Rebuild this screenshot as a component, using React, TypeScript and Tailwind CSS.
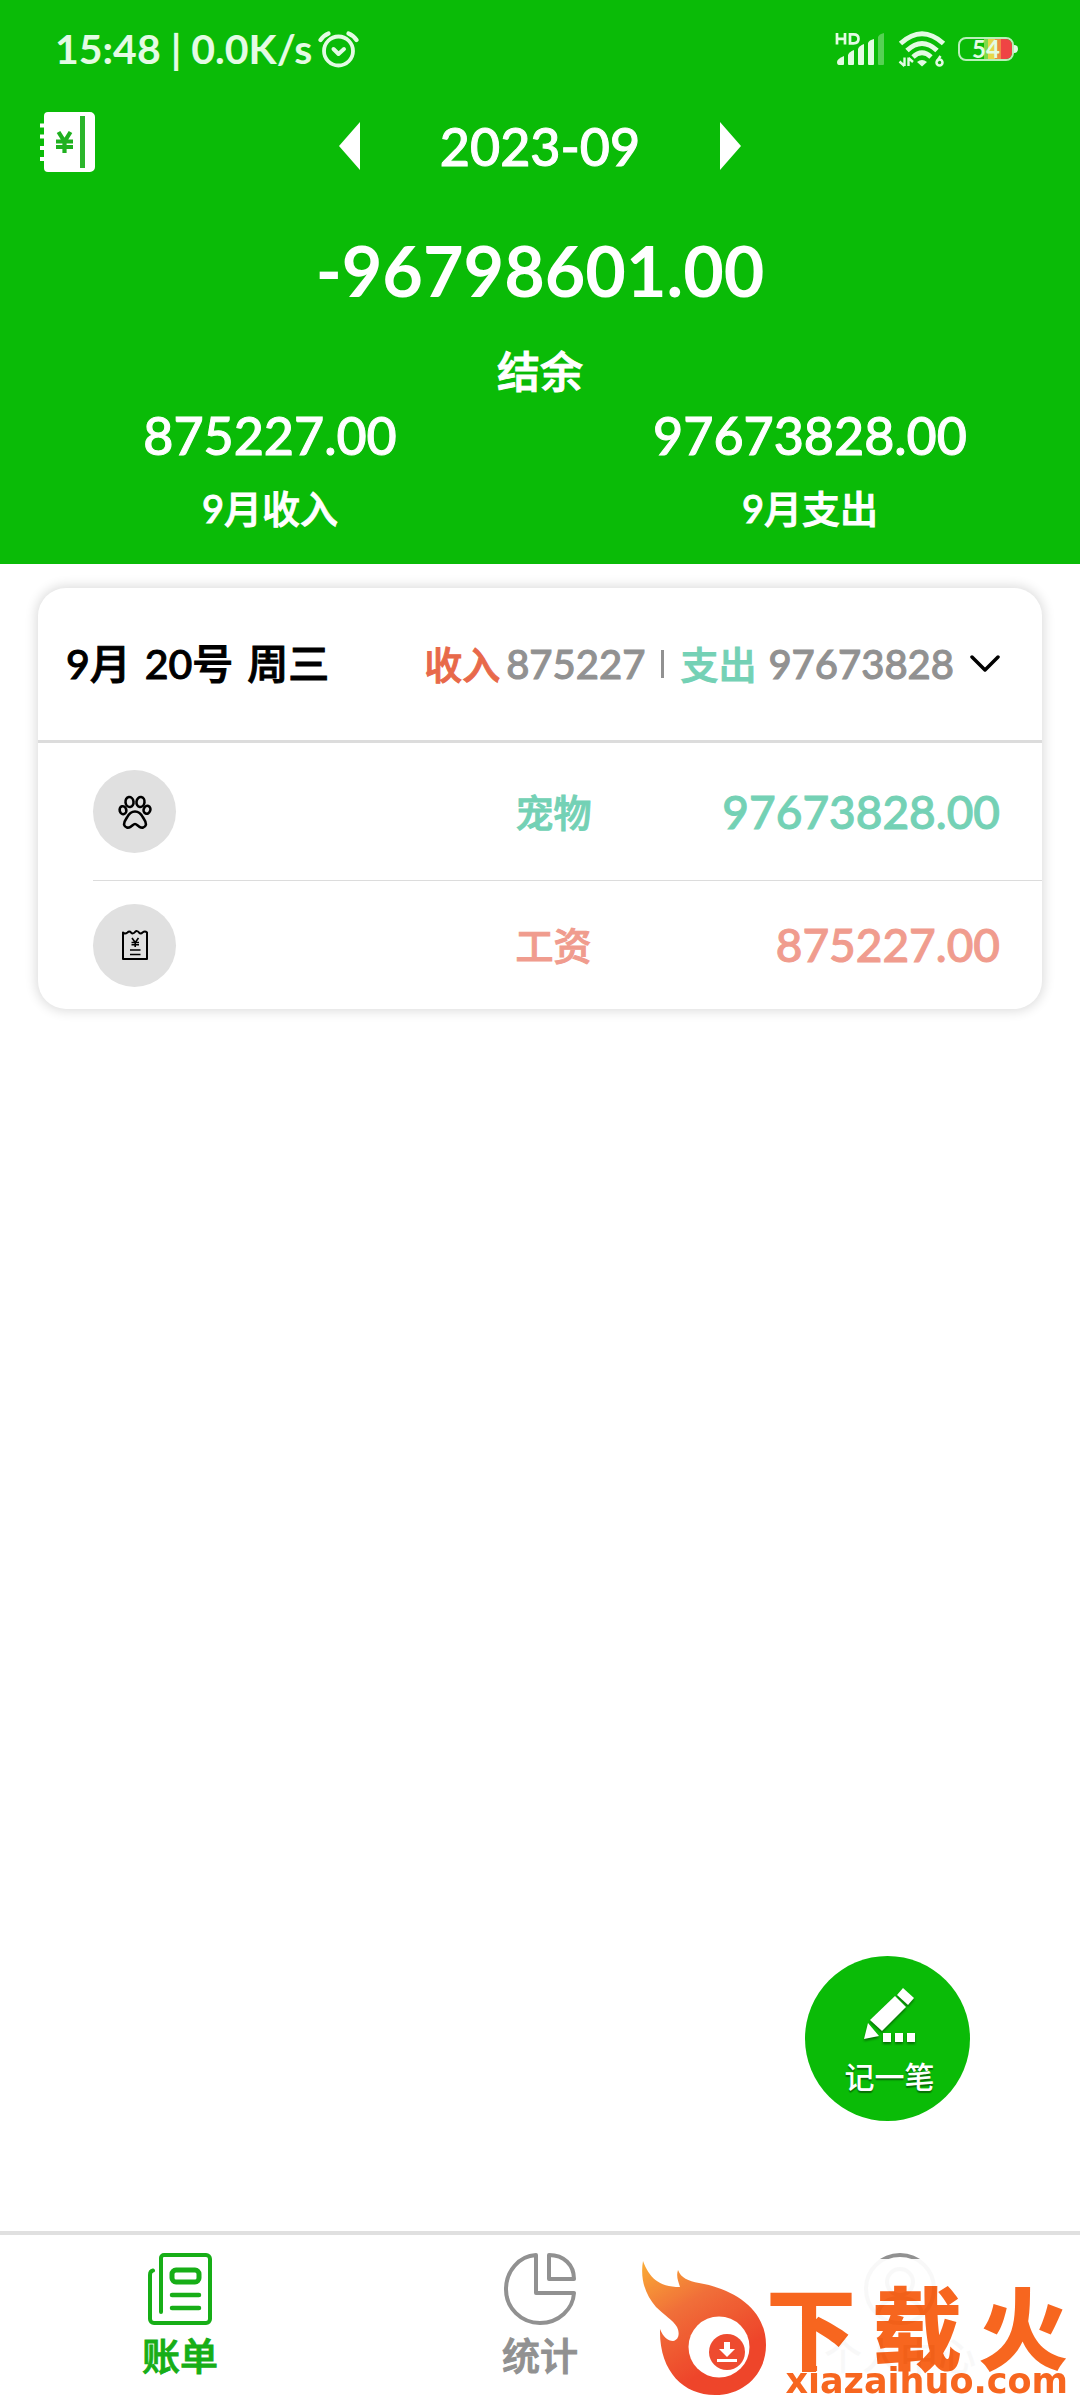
import React from "react";

type Entry = { id: string; label: string; amount: string; tone: string; icon: React.ReactNode };

function AlarmIcon() {
  return (
    <svg viewBox="0 0 41 37" className="h-[37px] w-[41px]" fill="none" stroke="currentColor" strokeLinecap="round" aria-hidden="true">
      <circle cx="20.500" cy="20" r="14.500" strokeWidth="3.800" />
      <path d="M2.500 9 Q5.500 4.500 10.500 2.500 M38.500 9 Q35.500 4.500 30.500 2.500" strokeWidth="4.200" />
      <path d="M15.500 18 L20.500 23 L26 18" strokeWidth="4" strokeLinejoin="round" />
    </svg>
  );
}

function SignalIcon() {
  return (
    <svg viewBox="0 0 52 34" className="h-[34px] w-[52px]" fill="currentColor" aria-hidden="true">
      <path d="M3 1v11.500M11 1v11.500M3 6.800h8" stroke="currentColor" strokeWidth="2.700" fill="none" />
      <path d="M16 2.300h3.500q5 0 5 4.500t-5 4.500H16z" stroke="currentColor" strokeWidth="2.700" fill="none" />
      <path d="M3 30q0-3 7-6v8a1 1 0 0 1-1 1H5q-2 0-2-3z" />
      <path d="M14 23q1-3 6-5v14a1 1 0 0 1-1 1h-4a1 1 0 0 1-1-1z" />
      <path d="M24 17q1-3 6-5v20a1 1 0 0 1-1 1h-4a1 1 0 0 1-1-1z" />
      <path d="M34 11q1-3 6-4v25a1 1 0 0 1-1 1h-4a1 1 0 0 1-1-1z" />
      <path d="M44 5q1-3 6-4v31a1 1 0 0 1-1 1h-4a1 1 0 0 1-1-1z" opacity="0.350" />
    </svg>
  );
}

function WifiIcon() {
  return (
    <svg viewBox="0 0 48 36" className="h-[36px] w-[48px]" fill="none" stroke="currentColor" aria-hidden="true">
      <path d="M2.500 12.500Q24-7 45.500 12.500" strokeWidth="5" />
      <path d="M9 19.500Q24 5.500 39 19.500" strokeWidth="5" />
      <path d="M15 26Q24 17.500 33 26" strokeWidth="4.800" />
      <path d="M19 31Q24 27 29 31L24 35.500z" fill="currentColor" stroke="none" />
      <path d="M6.500 26.500v8.500M6.500 35L1.500 30.500M10.500 35v-8.500M10.500 27L15 31" strokeWidth="2.400" />
      <path d="M42.500 25L38.800 30.500" strokeWidth="2.500" />
      <circle cx="41.500" cy="31.500" r="3" strokeWidth="2.500" />
    </svg>
  );
}

function Battery() {
  return (
    <div className="flex items-center" role="img" aria-label="54%">
      <div className="relative flex h-6 w-14 items-center justify-center rounded-lg border-2 border-[#b9f0b9]">
        <div className="absolute inset-y-0 right-0 flex overflow-hidden rounded-r-md">
          <span className="h-full w-1 bg-[#7fd94a]" />
          <span className="h-full w-[7px] bg-[#e6d84a]" />
          <span className="h-full w-1.5 bg-[#f08a45]" />
          <span className="h-full w-[11px] bg-[#ef4444]" />
        </div>
        <span className="relative text-2xl leading-7 font-bold">54</span>
      </div>
      <span className="h-2 w-1 rounded-r-full bg-[#e4fbe4]" />
    </div>
  );
}

function LedgerIcon() {
  return (
    <svg viewBox="0 0 55 60" className="h-[60px] w-[55px]" aria-hidden="true">
      <path d="M8 0h42a5 5 0 0 1 5 5v50a5 5 0 0 1-5 5H8a4 4 0 0 1-4-4V4a4 4 0 0 1 4-4z" fill="#fff" />
      <path d="M0 13.500h6M0 24.500h6M0 36h6M0 47h6" stroke="#fff" strokeWidth="4" />
      <path d="M42.500 4v52" stroke="#2bb52b" strokeWidth="5" />
      <path d="M18.500 20l6 9.500 6-9.500M24.500 28v13M16 29.500h17M16 35h17" stroke="#1fb01f" strokeWidth="4.200" fill="none" />
    </svg>
  );
}

function PawIcon() {
  return (
    <svg viewBox="0 0 34 34" className="h-[34px] w-[34px]" fill="none" stroke="#000" strokeWidth="2.600" aria-hidden="true">
      <ellipse cx="11.500" cy="7" rx="4" ry="5" transform="rotate(-8 11.500 7)" />
      <ellipse cx="22.500" cy="7" rx="4" ry="5" transform="rotate(8 22.500 7)" />
      <ellipse cx="5" cy="15.200" rx="3.300" ry="4" transform="rotate(-15 5 15.200)" />
      <ellipse cx="29" cy="14.800" rx="3.300" ry="4" transform="rotate(20 29 14.800)" />
      <path d="M17 16.500c4.500 0 6.500 3 8 6 2 3 3.500 5 2.800 7.500-.8 2.800-4 3.300-6.300 1.800-2-1.300-3-2.800-4.500-2.800s-2.500 1.500-4.500 2.800c-2.300 1.500-5.500 1-6.300-1.800-.7-2.500.8-4.500 2.800-7.500 1.500-3 3.500-6 8-6z" />
    </svg>
  );
}

function PayslipIcon() {
  return (
    <svg viewBox="0 0 26 30" className="h-[30px] w-[26px]" fill="none" stroke="#000" aria-hidden="true">
      <path d="M1 2.500v26.500h24V2.500Q23 .5 20.500 2.500 18.700 4.500 17 2.500 15 0 13 2 11 4.500 9 2.500 7.300.5 5.500 2.500 3 4.500 1 2.500z" strokeWidth="2" strokeLinejoin="round" />
      <path d="M10 8l3.200 4.500L16.500 8M13.200 12v5M9.500 12.500h7.500M9.500 14.800h7.500" strokeWidth="1.600" />
      <path d="M8 20h10.500M8 24.500h10.500" strokeWidth="1.400" />
    </svg>
  );
}

function PencilIcon() {
  return (
    <svg viewBox="0 0 52 58" className="h-[58px] w-[52px] drop-shadow-[0_2px_1px_rgba(0,0,0,0.4)]" fill="#fff" aria-hidden="true">
      <path d="M39 1l11 10-6 7-11-10z" />
      <path d="M31 9l11 11-24 24L6 33z" />
      <path d="M4 36l11 13L0 52z" />
      <path d="M19 46h8v9h-8zM31 46h8v9h-8zM43 46h8v9h-8z" />
    </svg>
  );
}

function BillIcon() {
  return (
    <svg viewBox="0 0 64 72" className="h-[72px] w-[64px]" fill="none" stroke="currentColor" strokeWidth="4" strokeLinecap="round" strokeLinejoin="round" aria-hidden="true">
      <path d="M13 59V5a3 3 0 0 1 3-3h42a4 4 0 0 1 4 4v60a4 4 0 0 1-4 4H6a4 4 0 0 1-4-4V22q0-4 3-4.500" />
      <rect x="24" y="17" width="27" height="12" rx="4" strokeWidth="5" />
      <path d="M24 42h27M24 55h27" strokeWidth="4.500" />
    </svg>
  );
}

function PieIcon() {
  return (
    <svg viewBox="0 0 72 72" className="h-[72px] w-[72px]" fill="none" stroke="currentColor" strokeWidth="4" strokeLinejoin="round" aria-hidden="true">
      <path d="M32 2C15 3 2 18 2 36.500 2 55 17 70 36 70s33-14 34-30H32z" />
      <path d="M45 2v24h25C70 12 60 2 45 2z" />
    </svg>
  );
}

function PersonIcon() {
  return (
    <svg viewBox="0 0 72 72" className="h-[72px] w-[72px]" fill="none" stroke="currentColor" strokeWidth="4" aria-hidden="true">
      <circle cx="36" cy="36" r="34" />
      <circle cx="36" cy="29" r="13" />
      <path d="M14 60q4-15 22-15t22 15" />
    </svg>
  );
}

function FlameLogo() {
  return (
    <svg viewBox="0 0 124 134" className="h-[134px] w-[124px] shrink-0" aria-hidden="true">
      <defs>
        <linearGradient id="flame" x1="0.100" y1="0" x2="0.550" y2="0.800">
          <stop offset="0" stopColor="#f9a12a" />
          <stop offset="0.450" stopColor="#f0652d" />
          <stop offset="1" stopColor="#ee3a1d" />
        </linearGradient>
      </defs>
      <path fill="url(#flame)" d="M1 0C7 16 16 26 38 26 36 20 34 15 36 9 39 17 46 20 57 22 92 28 124 48 124 84 124 113 102 134 73 134 41 134 17 110 18 68 21 76 26 80 31 80 37 79 38 72 35 66 31 59 22 54 14 46 3 33-2 18 1 0z" />
      <circle cx="77" cy="86" r="30.500" fill="#fff" />
      <circle cx="85" cy="91" r="18" fill="#ee4023" />
      <path d="M82 81h6v7h5l-8 8-8-8h5zM75 98h20v3H75z" fill="#fff" />
    </svg>
  );
}

const entries: Entry[] = [
  { id: "pet", label: "宠物", amount: "97673828.00", tone: "text-[#74d1b5]", icon: <PawIcon /> },
  { id: "pay", label: "工资", amount: "875227.00", tone: "text-[#f09c8e]", icon: <PayslipIcon /> },
];

const totals = [
  { label: "9月收入", amount: "875227.00" },
  { label: "9月支出", amount: "97673828.00" },
];

export default function App() {
  return (
    <div className="flex min-h-screen flex-col bg-white font-['Lato','Noto_Sans_CJK_SC',sans-serif] font-medium">
      <header className="bg-[#0abb07] pb-[26px] text-white">
        <div className="flex h-[98px] items-center justify-between pr-[62px] pl-[55px] text-[#e4fbe4]">
          <div className="flex items-center gap-1.5">
            <span className="text-[41px] leading-[48px] font-bold">15:48 | 0.0K/s</span>
            <AlarmIcon />
          </div>
          <div className="flex items-center gap-3">
            <SignalIcon />
            <WifiIcon />
            <Battery />
          </div>
        </div>

        <div className="grid h-[96px] grid-cols-[1fr_auto_1fr] items-center px-10">
          <button type="button" aria-label="账本" className="justify-self-start pb-2">
            <LedgerIcon />
          </button>
          <div className="flex items-center gap-20">
            <button type="button" aria-label="上个月">
              <svg viewBox="0 0 21 48" className="h-12 w-[21px]" fill="#fff"><path d="M21 0v48L0 24z" /></svg>
            </button>
            <h1 className="text-[52px] leading-[60px] [-webkit-text-stroke:1px_currentColor]">2023-09</h1>
            <button type="button" aria-label="下个月">
              <svg viewBox="0 0 21 48" className="h-12 w-[21px]" fill="#fff"><path d="M0 0v48l21-24z" /></svg>
            </button>
          </div>
        </div>

        <div className="pt-8 text-center">
          <p className="text-[70px] leading-[88px] font-bold">-96798601.00</p>
          <p className="pt-7 text-[43px] leading-[60px] [-webkit-text-stroke:1px_currentColor]">结余</p>
        </div>
        <div className="grid grid-cols-2 text-center [-webkit-text-stroke:1px_currentColor]">
          {totals.map((t) => (
            <div key={t.label}>
              <p className="text-[52px] leading-[66px]">{t.amount}</p>
              <p className="pt-2.5 text-[38px] leading-[60px]">{t.label}</p>
            </div>
          ))}
        </div>
      </header>

      <main className="flex flex-1 flex-col px-[38px] pt-6">
        <section className="rounded-[28px] bg-white shadow-[0_0_12px_2px_rgba(0,0,0,0.14)]">
          <button type="button" aria-expanded="true" className="flex h-[155px] w-full items-center justify-between border-b-3 border-[#dcdcdc] pr-[42px] pl-7 [-webkit-text-stroke:1px_currentColor]">
            <span className="flex gap-3.5 text-[41px] leading-[56px] text-black">
              <span>9月</span>
              <span>20号</span>
              <span>周三</span>
            </span>
            <span className="flex items-center text-[40px] leading-[56px] text-[#919191]">
              <span className="pr-1.5 text-[38px] text-[#e8694a]">收入</span>
              <span>875227</span>
              <span className="mx-4 h-7 w-[3px] bg-[#919191]" />
              <span className="pr-3 text-[38px] text-[#74d1b5]">支出</span>
              <span>97673828</span>
              <svg viewBox="0 0 30 18" className="ml-4 h-[18px] w-[30px]" fill="none" stroke="#000" strokeWidth="3.500" strokeLinecap="round" strokeLinejoin="round" aria-hidden="true">
                <path d="M2 2l13 13L28 2" />
              </svg>
            </span>
          </button>
          <ul className="divide-y divide-[#dcdcdc] pl-[55px]">
            {entries.map((e) => (
              <li key={e.id} className="grid h-[138px] grid-cols-[1fr_auto_1fr] items-center pr-[42px] [-webkit-text-stroke:1px_currentColor] last:h-[128px]">
                <span className="flex size-[83px] items-center justify-center rounded-full bg-[#e0e0e0]">{e.icon}</span>
                <span className={`pl-3.5 text-[38px] leading-[56px] ${e.tone}`}>{e.label}</span>
                <span className={`text-right text-[46px] leading-[56px] ${e.tone}`}>{e.amount}</span>
              </li>
            ))}
          </ul>
        </section>
        <button type="button" className="mt-auto mr-[72px] mb-[110px] flex size-[165px] flex-col items-center self-end rounded-full bg-[#0abb07] pt-[31px] pl-1 text-white">
          <PencilIcon />
          <span className="pt-2.5 text-[30px] leading-[42px] [text-shadow:0_2px_1px_rgba(0,0,0,0.4)]">记一笔</span>
        </button>
      </main>

      <nav className="relative grid h-[169px] grid-cols-3 border-t-4 border-[#e0e0e0] text-[38px] leading-[48px] text-[#919191]">
        <a href="#bills" aria-current="page" className="flex flex-col items-center gap-1.5 pt-[18px] text-[#17ae17] [-webkit-text-stroke:1px_currentColor]">
          <BillIcon />
          账单
        </a>
        <a href="#stats" className="flex flex-col items-center gap-1.5 pt-[18px] [-webkit-text-stroke:1px_currentColor]">
          <PieIcon />
          统计
        </a>
        <a href="#me" className="flex flex-col items-center gap-1.5 pt-[18px]">
          <PersonIcon />
          个人中心
        </a>
        <div className="absolute right-0 bottom-0 flex h-[141px] w-[446px] items-start bg-white pt-0.5 pr-3 pl-2 text-[#f75d12] opacity-94">
          <FlameLogo />
          <div className="flex flex-1 flex-col pt-6">
            <div className="flex justify-between font-['Noto_Sans_CJK_SC',sans-serif] text-[90px] leading-[78px] font-black">
              <span>下</span>
              <span>载</span>
              <span>火</span>
            </div>
            <span className="self-end font-['DejaVu_Sans',sans-serif] text-[35px] leading-[36px] font-bold">xiazaihuo.com</span>
          </div>
        </div>
      </nav>
    </div>
  );
}
